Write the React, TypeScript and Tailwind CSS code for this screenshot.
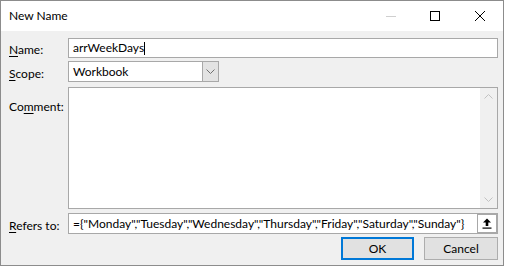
import React from 'react';

const font = { fontFamily: 'Lato, "Noto Sans", sans-serif' };

function Label({ pre, u, post }: { pre?: string; u: string; post: string }) {
    return (
        <span className="text-[12px] text-black leading-none whitespace-nowrap">
            {pre}
            <span className="underline underline-offset-2">{u}</span>
            {post}
        </span>
    );
}

function Chevron({ up, className }: { up?: boolean; className?: string }) {
    return (
        <svg width="9" height="5" viewBox="0 0 9 5" className={className}>
            <path d={up ? 'M0.5 4.5 L4.5 0.5 L8.5 4.5' : 'M0.5 0.5 L4.5 4.5 L8.5 0.5'} fill="none" stroke="currentColor" strokeWidth="1" />
        </svg>
    );
}

export default function App() {
    return (
        <div className="w-[506px] h-[267px] bg-white" style={font}>
            <div className="w-[504px] h-[266px] border border-[#8c8c8c] bg-[#f0f0f0] flex flex-col">
                {/* title bar */}
                <div className="h-[30px] bg-white flex items-center shrink-0">
                    <span className="ml-[8px] text-[12px] text-black">New Name</span>
                    <div className="ml-auto flex items-center h-full">
                        <div className="w-[44px] h-full flex items-center justify-center">
                            <span className="block w-[10px] h-px bg-[#cfcfcf]" />
                        </div>
                        <div className="w-[44px] h-full flex items-center justify-center">
                            <span className="block w-[10px] h-[10px] border border-black" />
                        </div>
                        <div className="w-[46px] h-full flex items-center justify-center">
                            <svg width="10" height="10" viewBox="0 0 10 10">
                                <path d="M0 0 L10 10 M10 0 L0 10" stroke="#000" strokeWidth="1" />
                            </svg>
                        </div>
                    </div>
                </div>

                {/* body */}
                <div className="flex-1 flex flex-col pl-[8px] pr-[5px] pt-[7px]">
                    <div className="flex items-center h-[20px]">
                        <div className="w-[59px] shrink-0"><Label u="N" post="ame:" /></div>
                        <div className="flex-1 min-w-0 h-[20px] bg-white border border-[#a8a8a8] flex items-center px-[4px] text-[12px] text-black">
                            arrWeekDays<span className="inline-block w-px h-[13px] bg-black" />
                        </div>
                    </div>

                    <div className="flex items-center h-[21px] mt-[3px]">
                        <div className="w-[59px] shrink-0"><Label u="S" post="cope:" /></div>
                        <div className="w-[151px] h-[21px] bg-white border border-[#a8a8a8] flex items-center">
                            <span className="flex-1 px-[4px] text-[12px] text-black">Workbook</span>
                            <span className="w-[16px] h-full bg-[#e3e3e3] border-l border-[#a8a8a8] flex items-center justify-center text-[#707070]">
                                <Chevron />
                            </span>
                        </div>
                    </div>

                    <div className="flex mt-[5px] h-[122px]">
                        <div className="w-[59px] shrink-0 pt-[6px]"><Label pre="Co" u="m" post="ment:" /></div>
                        <div className="flex-1 min-w-0 bg-white border border-[#a8a8a8] flex justify-end">
                            <div className="w-[17px] h-full bg-[#f0f0f0] flex flex-col items-center justify-between py-[6px] text-[#c2c2c2]">
                                <Chevron up />
                                <Chevron />
                            </div>
                        </div>
                    </div>

                    <div className="flex items-center h-[21px] mt-[4px]">
                        <div className="w-[59px] shrink-0"><Label u="R" post="efers to:" /></div>
                        <div className="flex-1 min-w-0 h-[21px] bg-white border border-[#a8a8a8] flex items-center">
                            <span className="flex-1 min-w-0 px-[4px] text-[12px] text-black whitespace-nowrap overflow-hidden">
                                ={'{'}"Monday","Tuesday","Wednesday","Thursday","Friday","Saturday","Sunday"{'}'}
                            </span>
                            <span className="w-[20px] h-[19px] shrink-0 bg-white border border-[#a8a8a8] flex items-center justify-center">
                                <svg width="10" height="11" viewBox="0 0 10 11">
                                    <path d="M5 0.5 L9 4.5 L6.3 4.5 L6.3 8 L3.7 8 L3.7 4.5 L1 4.5 Z" fill="#000" />
                                    <rect x="0.5" y="9.5" width="9" height="1.2" fill="#000" />
                                </svg>
                            </span>
                        </div>
                    </div>

                    <div className="flex justify-end gap-[10px] mt-[3px]">
                        <button type="button" className="w-[73px] h-[23px] bg-[#e1e1e1] border-2 border-[#0078d7] text-[12px] text-black">OK</button>
                        <button type="button" className="w-[74px] h-[23px] bg-[#e1e1e1] border border-[#adadad] text-[12px] text-black">Cancel</button>
                    </div>
                </div>
            </div>
        </div>
    );
}
